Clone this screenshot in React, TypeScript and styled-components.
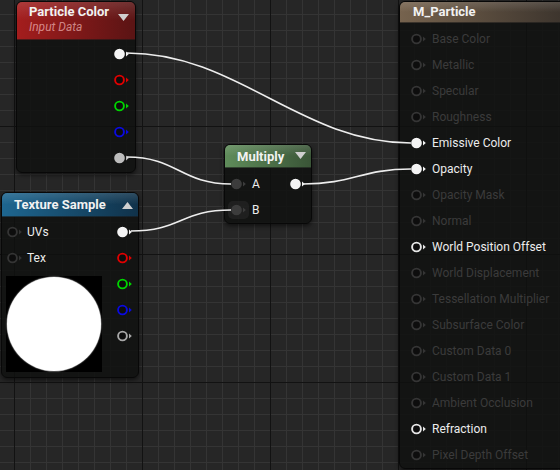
import styled, { createGlobalStyle } from "styled-components";

const GlobalStyle = createGlobalStyle`
  html, body {
    margin: 0;
    padding: 0;
    background: #262626;
  }
  body {
    font-family: Roboto, "Noto Sans", "Liberation Sans", sans-serif;
  }
`;

const Canvas = styled.div`
  position: relative;
  width: 560px;
  height: 470px;
  overflow: hidden;
  background-color: #262626;
  background-image: linear-gradient(to bottom, #121212 1px, transparent 1px),
    linear-gradient(to right, #121212 1px, transparent 1px),
    linear-gradient(to bottom, #343434 1px, transparent 1px),
    linear-gradient(to right, #343434 1px, transparent 1px);
  background-size: 128px 128px, 128px 128px, 16px 16px, 16px 16px;
  background-position: 0 126px, 14px 0, 0 14px, 14px 0;
`;

const Node = styled.div<{ $x: number; $y: number; $w: number }>`
  position: absolute;
  left: ${(p) => p.$x}px;
  top: ${(p) => p.$y}px;
  width: ${(p) => p.$w}px;
  box-sizing: border-box;
  border: 1px solid #080808;
  border-radius: 6px;
  background: rgba(16, 17, 16, 0.84);
  box-shadow: 0 2px 4px rgba(0, 0, 0, 0.55);
  overflow: hidden;
`;

const Header = styled.div<{ $from: string; $to: string; $pad: string }>`
  display: flex;
  align-items: flex-start;
  justify-content: space-between;
  padding: ${(p) => p.$pad};
  background: linear-gradient(
      to bottom,
      rgba(255, 255, 255, 0.13),
      rgba(255, 255, 255, 0) 50%
    ),
    linear-gradient(to right, ${(p) => p.$from}, ${(p) => p.$to});
  border-bottom: 1px solid rgba(0, 0, 0, 0.55);
`;

const Titles = styled.div`
  display: flex;
  flex-direction: column;
`;

const Title = styled.div`
  font-size: 13px;
  font-weight: 700;
  line-height: 16px;
  color: #f2f2f2;
  white-space: nowrap;
`;

const Subtitle = styled.div`
  font-size: 12px;
  font-style: italic;
  line-height: 15px;
  color: rgba(255, 205, 205, 0.62);
  white-space: nowrap;
`;

const CaretIcon = styled.svg<{ $top: number }>`
  display: block;
  flex: none;
  margin-top: ${(p) => p.$top}px;
`;

const Caret = ({ up, top }: { up?: boolean; top: number }) => (
  <CaretIcon $top={top} width="11" height="7" viewBox="0 0 11 7">
    <polygon
      points={up ? "0,7 11,7 5.5,0" : "0,0 11,0 5.5,7"}
      fill="#cfcfcf"
    />
  </CaretIcon>
);

const Body = styled.div<{ $pad: string; $end?: boolean }>`
  display: flex;
  justify-content: ${(p) => (p.$end ? "flex-end" : "space-between")};
  padding: ${(p) => p.$pad};
`;

const Column = styled.div<{ $end?: boolean }>`
  display: flex;
  flex-direction: column;
  align-items: ${(p) => (p.$end ? "flex-end" : "flex-start")};
`;

const Row = styled.div<{ $gap?: number }>`
  display: flex;
  align-items: center;
  height: 26px;
  gap: ${(p) => p.$gap ?? 5}px;
`;

const Label = styled.span<{ $dim?: boolean }>`
  font-size: 12px;
  line-height: 14px;
  color: ${(p) => (p.$dim ? "#3b3b3b" : "#ececec")};
  white-space: nowrap;
`;

const PinIcon = styled.svg<{ $hover?: boolean }>`
  display: block;
  flex: none;
  border-radius: 2px;
  background: ${(p) => (p.$hover ? "rgba(255,255,255,0.05)" : "transparent")};
  box-shadow: ${(p) =>
    p.$hover ? "0 0 0 3px rgba(255,255,255,0.05)" : "none"};
`;

const Pin = ({
  color,
  filled,
  hover,
}: {
  color: string;
  filled?: boolean;
  hover?: boolean;
}) => (
  <PinIcon $hover={hover} width="15" height="12" viewBox="0 0 15 12">
    {filled ? (
      <circle cx="5.5" cy="6" r="5.3" fill={color} />
    ) : (
      <circle
        cx="5.5"
        cy="6"
        r="4.4"
        fill="#0d0d0d"
        stroke={color}
        strokeWidth="1.9"
      />
    )}
    <path d="M12 3.6 L14.8 6 L12 8.4 Z" fill={color} />
  </PinIcon>
);

const Preview = styled.div`
  width: 96px;
  height: 96px;
  margin: 5px 0 0 -1px;
  background: #000;
  display: flex;
  align-items: center;
  justify-content: center;
`;

const Disc = styled.div`
  width: 94px;
  height: 94px;
  border-radius: 50%;
  background: #fff;
  box-shadow: 0 0 1px 0.5px rgba(255, 255, 255, 0.6);
`;

const Wires = styled.svg`
  position: absolute;
  left: 0;
  top: 0;
  z-index: 2;
  pointer-events: none;
`;

const wire = (x1: number, y1: number, x2: number, y2: number, k: number) =>
  `M${x1} ${y1} C${x1 + k} ${y1} ${x2 - k} ${y2} ${x2} ${y2}`;

const materialInputs: { name: string; state: "dim" | "linked" | "open" }[] = [
  { name: "Base Color", state: "dim" },
  { name: "Metallic", state: "dim" },
  { name: "Specular", state: "dim" },
  { name: "Roughness", state: "dim" },
  { name: "Emissive Color", state: "linked" },
  { name: "Opacity", state: "linked" },
  { name: "Opacity Mask", state: "dim" },
  { name: "Normal", state: "dim" },
  { name: "World Position Offset", state: "open" },
  { name: "World Displacement", state: "dim" },
  { name: "Tessellation Multiplier", state: "dim" },
  { name: "Subsurface Color", state: "dim" },
  { name: "Custom Data 0", state: "dim" },
  { name: "Custom Data 1", state: "dim" },
  { name: "Ambient Occlusion", state: "dim" },
  { name: "Refraction", state: "open" },
  { name: "Pixel Depth Offset", state: "dim" },
];

const rgbaPins = [
  { color: "#f4f4f4", filled: true },
  { color: "#e00000" },
  { color: "#00d400" },
  { color: "#0a0ae0" },
  { color: "#bdbdbd", filled: true },
];

const textureOutputs = [
  { color: "#f4f4f4", filled: true },
  { color: "#e00000" },
  { color: "#00d400" },
  { color: "#0a0ae0" },
  { color: "#a8a8a8" },
];

export default function App() {
  return (
    <>
      <GlobalStyle />
      <Canvas>
        <Node $x={16} $y={1} $w={120}>
          <Header $from="#a41d1d" $to="#5a1414" $pad="2px 6px 4px 12px">
            <Titles>
              <Title>Particle Color</Title>
              <Subtitle>Input Data</Subtitle>
            </Titles>
            <Caret top={10} />
          </Header>
          <Body $pad="1px 6px 1px 6px" $end>
            <Column $end>
              {rgbaPins.map((p, i) => (
                <Row key={i}>
                  <Pin color={p.color} filled={p.filled} />
                </Row>
              ))}
            </Column>
          </Body>
        </Node>

        <Node $x={1} $y={192} $w={138}>
          <Header $from="#1e6690" $to="#10324a" $pad="4px 5px 3px 12px">
            <Title>Texture Sample</Title>
            <Caret up top={5} />
          </Header>
          <Body $pad="2px 6px 5px 5px">
            <Column>
              <Row>
                <Pin color="#343434" />
                <Label>UVs</Label>
              </Row>
              <Row>
                <Pin color="#343434" />
                <Label>Tex</Label>
              </Row>
              <Preview>
                <Disc />
              </Preview>
            </Column>
            <Column $end>
              {textureOutputs.map((p, i) => (
                <Row key={i}>
                  <Pin color={p.color} filled={p.filled} />
                </Row>
              ))}
            </Column>
          </Body>
        </Node>

        <Node $x={224} $y={144} $w={88}>
          <Header $from="#5f8c5a" $to="#3a5537" $pad="4px 5px 2px 12px">
            <Title>Multiply</Title>
            <Caret top={3} />
          </Header>
          <Body $pad="3px 6px 0 6px">
            <Column>
              <Row $gap={6}>
                <Pin color="#3c3c3c" filled />
                <Label>A</Label>
              </Row>
              <Row $gap={6}>
                <Pin color="#3c3c3c" filled hover />
                <Label>B</Label>
              </Row>
            </Column>
            <Column $end>
              <Row>
                <Pin color="#f4f4f4" filled />
              </Row>
            </Column>
          </Body>
        </Node>

        <Node $x={399} $y={1} $w={180}>
          <Header $from="#76634e" $to="#37302a" $pad="2px 6px 2px 13px">
            <Title>M_Particle</Title>
          </Header>
          <Body $pad="3px 0 0 11px">
            <Column>
              {materialInputs.map((m) => (
                <Row key={m.name} $gap={6}>
                  <Pin
                    color={
                      m.state === "dim"
                        ? "#353535"
                        : m.state === "linked"
                        ? "#f4f4f4"
                        : "#e6e6e6"
                    }
                    filled={m.state === "linked"}
                  />
                  <Label $dim={m.state === "dim"}>{m.name}</Label>
                </Row>
              ))}
            </Column>
          </Body>
        </Node>

        <Wires width="560" height="470" viewBox="0 0 560 470">
          <g fill="none" stroke="#ededed" strokeWidth="1.7">
            <path d={wire(127, 53, 411, 143, 110)} />
            <path d={wire(127, 157, 231, 184, 50)} />
            <path d={wire(131, 231, 231, 210, 50)} />
            <path d={wire(303, 184, 411, 169, 50)} />
          </g>
        </Wires>
      </Canvas>
    </>
  );
}
